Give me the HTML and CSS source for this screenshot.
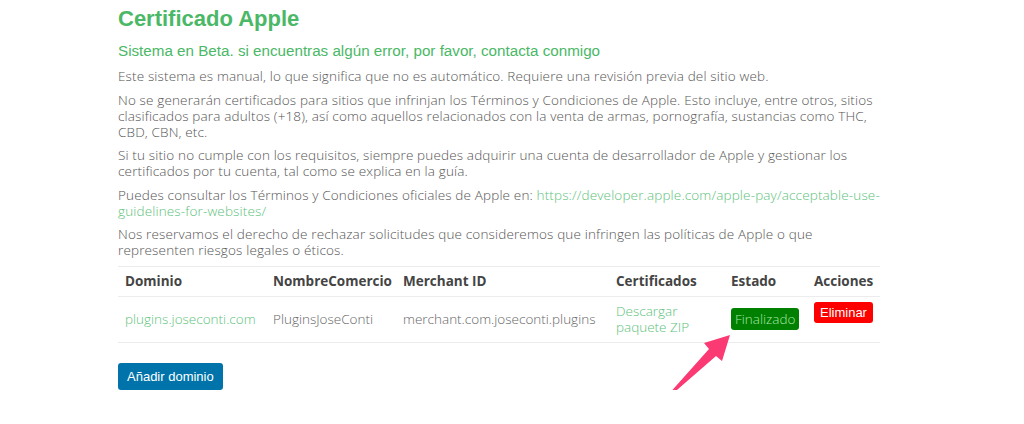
FILE: index.html
```html
<!DOCTYPE html>
<html lang="es">
<head>
    <meta charset="UTF-8">
    <meta name="viewport" content="width=device-width, initial-scale=1.0">
    <title>Certificado Apple</title>
    <link rel="stylesheet" href="styles.css">
</head>
<body>
    <div class="wrap">
        <h1>Certificado Apple</h1>
        <h2>Sistema en Beta. si encuentras algún error, por favor, contacta conmigo</h2>

        <p>Este sistema es manual, lo que significa que no es automático. Requiere una revisión previa del sitio web.</p>
        <p>No se generarán certificados para sitios que infrinjan los Términos y Condiciones de Apple. Esto incluye, entre otros, sitios clasificados para adultos (+18), así como aquellos relacionados con la venta de armas, pornografía, sustancias como THC, CBD, CBN, etc.</p>
        <p>Si tu sitio no cumple con los requisitos, siempre puedes adquirir una cuenta de desarrollador de Apple y gestionar los certificados por tu cuenta, tal como se explica en la guía.</p>
        <p>Puedes consultar los Términos y Condiciones oficiales de Apple en: <a href="#">https://developer.apple.com/apple-pay/acceptable-use-guidelines-for-websites/</a></p>
        <p>Nos reservamos el derecho de rechazar solicitudes que consideremos que infringen las políticas de Apple o que representen riesgos legales o éticos.</p>

        <!-- Domain table -->
        <table class="domains">
            <colgroup>
                <col class="c-domain">
                <col class="c-name">
                <col class="c-merchant">
                <col class="c-cert">
                <col class="c-state">
                <col class="c-actions">
            </colgroup>
            <thead>
                <tr>
                    <th>Dominio</th>
                    <th>NombreComercio</th>
                    <th>Merchant ID</th>
                    <th>Certificados</th>
                    <th>Estado</th>
                    <th>Acciones</th>
                </tr>
            </thead>
            <tbody>
                <tr>
                    <td><a href="#">plugins.joseconti.com</a></td>
                    <td>PluginsJoseConti</td>
                    <td>merchant.com.joseconti.plugins</td>
                    <td><a href="#">Descargar paquete ZIP</a></td>
                    <td><span class="status">Finalizado</span></td>
                    <td><button class="delete">Eliminar</button></td>
                </tr>
            </tbody>
        </table>

        <button class="add">Añadir dominio</button>

        <!-- annotation arrow -->
        <svg class="arrow" width="75" height="70" viewBox="0 0 75 70">
            <polygon points="65,5 57,31 51,26 8.5,63 6.5,61 44,19 39,13" fill="#fb3a74"/>
        </svg>
    </div>
</body>
</html>
```

FILE: styles.css
```css
body {
    margin: 0;
    padding: 0;
    background-color: #fff;
    font-family: "Open Sans", sans-serif;
    font-weight: 300;
    color: #555;
}
.wrap {
    position: relative;
    width: 762px;
    margin-left: 118px;
    padding-top: 4px;
}
h1 {
    font-family: "Liberation Sans", Arial, sans-serif;
    font-size: 22px;
    font-weight: bold;
    color: #4ab866;
    margin: 0 0 7px;
    line-height: 30px;
}
h2 {
    font-family: "Liberation Sans", Arial, sans-serif;
    font-size: 15.2px;
    font-weight: normal;
    color: #4ab866;
    margin: 0 0 7px;
    line-height: 20px;
}
p {
    font-size: 13.5px;
    letter-spacing: 0.15px;
    line-height: 16px;
    margin: 0 0 7.5px;
}
a {
    color: #5cc27c;
    text-decoration: none;
}
.domains {
    width: 100%;
    table-layout: fixed;
    border-collapse: collapse;
    margin-top: 2px;
    font-size: 13.5px;
}
.c-domain { width: 148px; }
.c-name { width: 130px; }
.c-merchant { width: 213px; }
.c-cert { width: 115px; }
.c-state { width: 83px; }
.c-actions { width: 73px; }
.domains th {
    text-align: left;
    font-weight: bold;
    color: #444;
    padding: 0 7px;
    height: 29px;
    border-top: 1px solid #ececec;
    border-bottom: 1px solid #ececec;
}
.domains td {
    padding: 0 7px;
    height: 45px;
    line-height: 16px;
    color: #666;
    white-space: nowrap;
    border-bottom: 1px solid #ececec;
}
.domains td:nth-child(4) {
    white-space: normal;
}
.status {
    display: inline-block;
    background-color: #008000;
    color: #a8e6a8;
    border-radius: 3px;
    padding: 3px 4px;
    line-height: 16px;
}
.delete {
    margin-bottom: 14px;
    background-color: #ff0000;
    color: #fff;
    border: none;
    border-radius: 3px;
    font-family: "Liberation Sans", Arial, sans-serif;
    font-size: 13px;
    padding: 3px 6px;
}
.add {
    margin-top: 20px;
    background-color: #0073aa;
    color: #fff;
    border: none;
    border-radius: 3px;
    font-family: "Liberation Sans", Arial, sans-serif;
    font-size: 13px;
    padding: 6px 9px;
}
.arrow {
    position: absolute;
    left: 547px;
    top: 330px;
}
```
